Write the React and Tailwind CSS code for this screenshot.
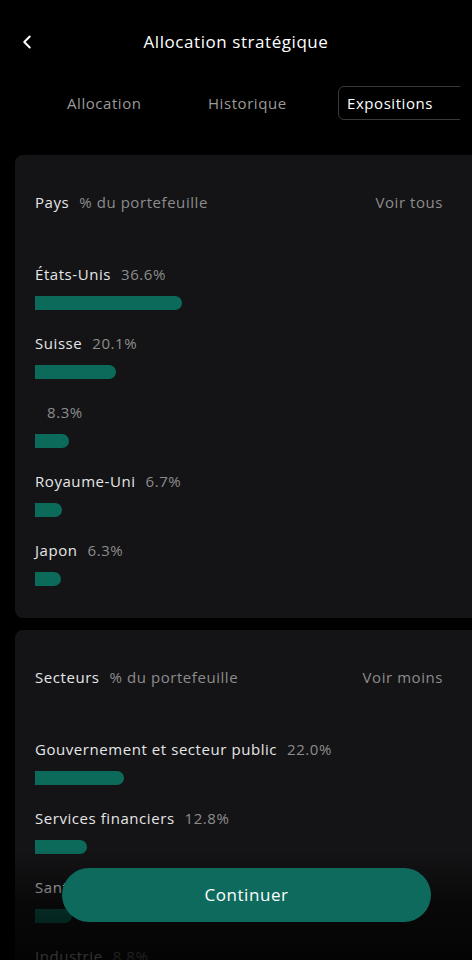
import { ChevronLeft } from 'lucide-react';

const countries = [
  { name: 'États-Unis', pct: '36.6%', w: 147 },
  { name: 'Suisse', pct: '20.1%', w: 81 },
  { name: '', pct: '8.3%', w: 34 },
  { name: 'Royaume-Uni', pct: '6.7%', w: 27 },
  { name: 'Japon', pct: '6.3%', w: 26 },
];

const sectors = [
  { name: 'Gouvernement et secteur public', pct: '22.0%', w: 89 },
  { name: 'Services financiers', pct: '12.8%', w: 52 },
  { name: 'Santé', pct: '9.1%', w: 37 },
  { name: 'Industrie', pct: '8.8%', w: 36 },
];

const Row = ({ item }) => (
  <div>
    <div className="flex items-center h-5 text-[15px] leading-5">
      <span className="text-[#e6e6e6] min-w-[2px]">{item.name}</span>
      <span className="text-[#8c8c8c] ml-[10px]">{item.pct}</span>
    </div>
    <div
      className="mt-3 h-[14px] bg-[#0c6a5b] rounded-r-full"
      style={{ width: item.w }}
    />
  </div>
);

const Card = ({ title, action, items }) => (
  <div className="ml-[15px] w-[470px] bg-[#141416] rounded-lg pt-[37px] pb-8 pl-5">
    <div className="flex items-center h-5 text-[15px] leading-5 w-[408px]">
      <span className="text-[#e6e6e6]">{title}</span>
      <span className="text-[#8c8c8c] ml-[10px]">% du portefeuille</span>
      <span className="text-[#8c8c8c] ml-auto">{action}</span>
    </div>
    <div className="mt-[52px] space-y-[23px]">
      {items.map((it, i) => (
        <Row key={i} item={it} />
      ))}
    </div>
  </div>
);

export default function App() {
  return (
    <div className="relative w-[472px] h-[960px] overflow-hidden bg-black tracking-[0.035em] font-['Open_Sans','Noto_Sans',sans-serif]">
      <div className="relative h-[84px] flex items-center justify-center">
        <ChevronLeft className="absolute left-[16px] w-[22px] h-[22px] text-white" strokeWidth={2.2} />
        <h1 className="text-[17px] text-white">Allocation stratégique</h1>
      </div>

      <div className="mt-[2px] w-[460px] overflow-hidden">
        <div className="flex items-center pl-[59px] text-[15px] w-[560px]">
          <div className="w-[141px] h-[34px] flex items-center pl-2 text-[#9a9a9a]">Allocation</div>
          <div className="w-[138px] h-[34px] flex items-center pl-2 text-[#9a9a9a]">Historique</div>
          <div className="w-[140px] h-[34px] flex items-center pl-2 text-white border border-[#3a3a3c] rounded-md">Expositions</div>
        </div>
      </div>

      <div className="mt-[35px] space-y-3">
        <Card title="Pays" action="Voir tous" items={countries} />
        <Card title="Secteurs" action="Voir moins" items={sectors} />
      </div>

      <div className="absolute left-0 right-0 bottom-0 h-[110px] bg-gradient-to-b from-black/0 via-black/60 to-black/80" />
      <button className="absolute left-[62px] top-[868px] w-[369px] h-[54px] rounded-full bg-[#0d6a5c] text-white text-[17px]">
        Continuer
      </button>
    </div>
  );
}
